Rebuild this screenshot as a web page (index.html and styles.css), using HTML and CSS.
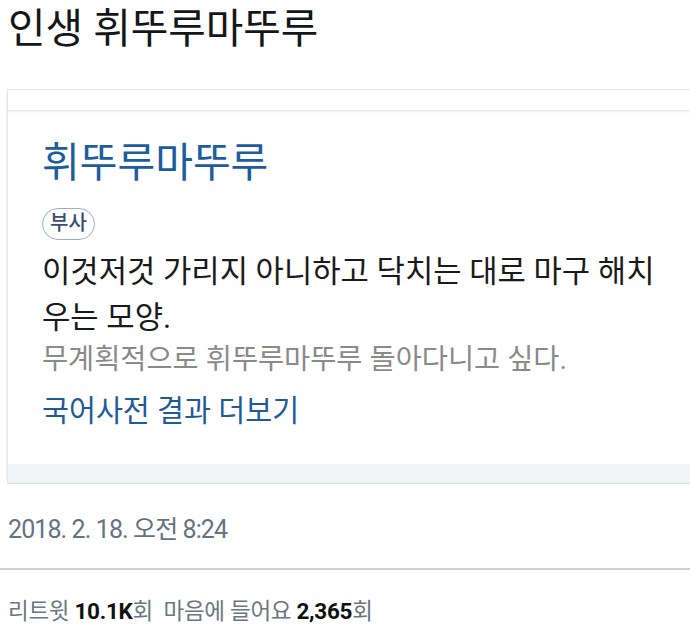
FILE: index.html
```html
<!DOCTYPE html>
<html lang="ko">
<head>
    <meta charset="UTF-8">
    <meta name="viewport" content="width=device-width, initial-scale=1.0">
    <title>인생 휘뚜루마뚜루</title>
    <link rel="stylesheet" href="styles.css">
</head>
<body>
    <div class="tweet">
        <p class="tweet-text">인생 휘뚜루마뚜루</p>

        <div class="card">
            <div class="card-top"></div>
            <div class="card-body">
                <h2 class="word">휘뚜루마뚜루</h2>
                <span class="badge">부사</span>
                <p class="meaning">이것저것 가리지 아니하고 닥치는 대로 마구 해치우는 모양.</p>
                <p class="example">무계획적으로 휘뚜루마뚜루 돌아다니고 싶다.</p>
                <a class="more" href="#">국어사전 결과 더보기</a>
            </div>
            <div class="card-bottom"></div>
        </div>

        <div class="date">2018. 2. 18. 오전 8:24</div>

        <div class="stats">
            리트윗 <strong>10.1K</strong>회&nbsp; 마음에 들어요 <strong>2,365</strong>회
        </div>
    </div>
</body>
</html>
```

FILE: styles.css
```css
* {
    margin: 0;
    padding: 0;
    box-sizing: border-box;
}

body {
    font-family: Roboto, "Noto Sans CJK KR", sans-serif;
    background: #fff;
    color: #14171a;
}

.tweet-text {
    padding: 6px 0 0 8px;
    font-size: 40.8px;
    line-height: 46px;
    height: 89px;
}

.card {
    margin-left: 7px;
    border-left: 1px solid #e6e8ea;
    border-top: 1px solid #e3e5e7;
    box-shadow: -5px 0 0 -4px #f0f0f0;
}

.card-top {
    height: 21px;
    border-bottom: 1px solid #e9e9e9;
    box-shadow: 0 1px 2px rgba(0, 0, 0, 0.06);
}

.card-body {
    padding: 29px 20px 31px 34px;
}

.word {
    font-size: 41px;
    font-weight: normal;
    line-height: 46px;
    color: #1c5d9e;
}

.badge {
    display: inline-block;
    margin-top: 22px;
    height: 32px;
    padding: 0 7px;
    border: 1.5px solid #9fadc3;
    border-radius: 16px;
    font-size: 20px;
    font-weight: 500;
    line-height: 29px;
    color: #3b4e70;
}

.meaning {
    margin-top: 9px;
    font-size: 30.8px;
    line-height: 46px;
    color: #1a1a1a;
}

.example {
    margin-top: -1px;
    font-size: 28.4px;
    line-height: 40px;
    color: #8a8a8a;
}

.more {
    display: block;
    margin-top: 9px;
    font-size: 29.3px;
    line-height: 44px;
    color: #1f5b97;
    text-decoration: none;
}

.card-bottom {
    height: 20px;
    background: #f1f3f4;
    border-bottom: 1px solid #dcdfe1;
}

.date {
    padding: 29px 0 21px 8px;
    font-size: 25px;
    line-height: 34px;
    letter-spacing: -0.9px;
    color: #657380;
    border-bottom: 2px solid #d0d0d0;
}

.stats {
    padding: 26px 0 0 8px;
    font-size: 22.5px;
    line-height: 30px;
    letter-spacing: -0.3px;
    color: #6b7680;
}

.stats strong {
    color: #111;
    font-weight: bold;
}
```
